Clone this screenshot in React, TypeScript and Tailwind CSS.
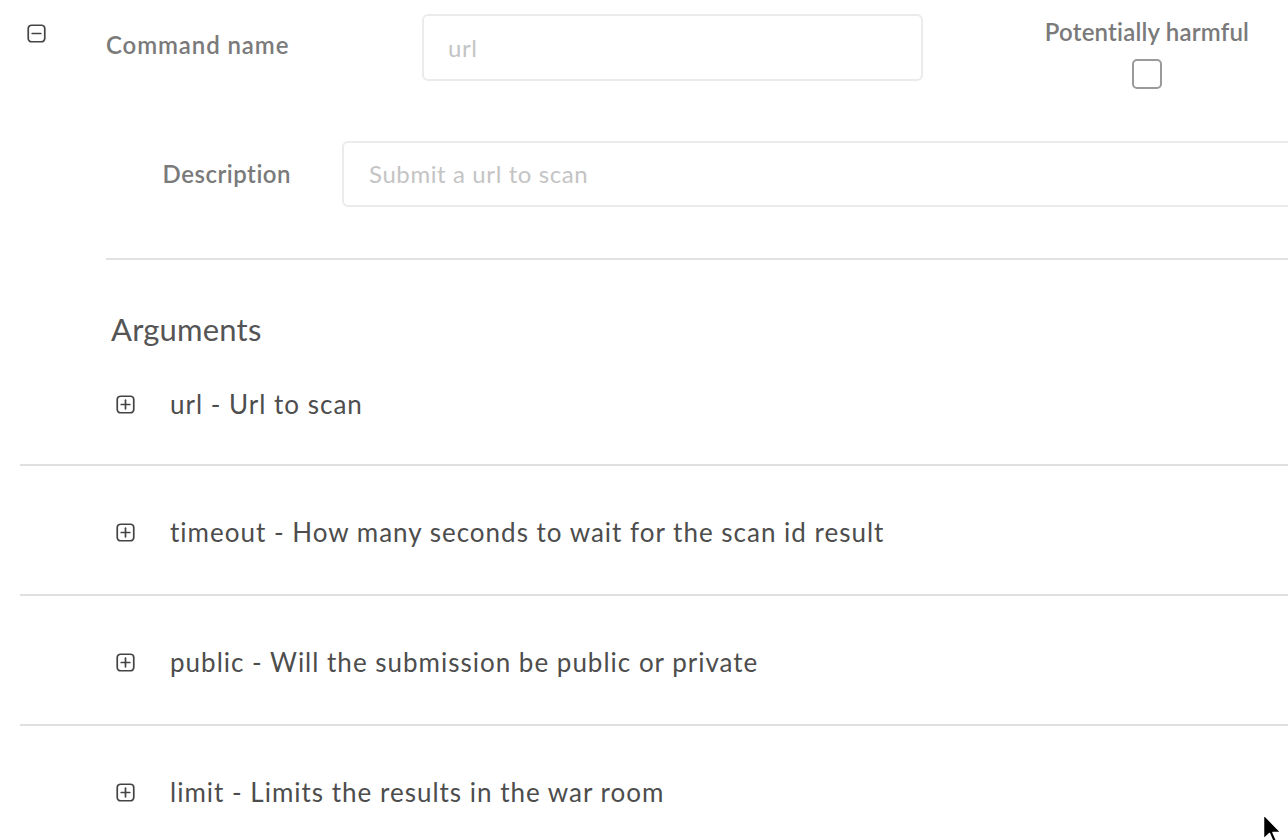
import React from 'react'

interface Argument {
  name: string
  description: string
}

const args: Argument[] = [
  { name: 'url', description: 'Url to scan' },
  { name: 'timeout', description: 'How many seconds to wait for the scan id result' },
  { name: 'public', description: 'Will the submission be public or private' },
  { name: 'limit', description: 'Limits the results in the war room' }
]

function SquareIcon({ plus }: { plus?: boolean }) {
  return (
    <svg width="19" height="19" viewBox="0 0 20 20" fill="none" stroke="#444444" strokeWidth={1.8} strokeLinecap="round">
      <rect x="1.3" y="1.3" width="17.4" height="17.4" rx="3.5" />
      <path d="M5.5 10h9" />
      {plus && <path d="M10 5.5v9" />}
    </svg>
  )
}

export default function App() {
  return (
    <div className="relative h-[840px] w-full overflow-hidden bg-white font-['Lato','Liberation_Sans',sans-serif]">
      {/* Command header */}
      <div className="ml-[20px] flex">
        <div className="ml-[7px] mt-[24px] w-[19px] shrink-0">
          <SquareIcon />
        </div>
        <div className="ml-[60px] min-w-0 flex-1">
          <div className="flex items-start">
            <label className="mt-[31px] w-[316px] shrink-0 text-[24px] leading-[28px] tracking-[0.9px] font-semibold text-[#7a7a7a]">
              Command name
            </label>
            <div className="mt-[14px] flex h-[67px] w-[501px] shrink-0 items-center rounded-[6px] border-2 border-[#ebebeb] pl-[24px] text-[24px] tracking-[0.6px] text-[#c4c4c4]">
              url
            </div>
            <div className="ml-[122px] mt-[18px] flex w-[204px] shrink-0 flex-col items-center">
              <span className="whitespace-nowrap text-[24px] leading-[28px] tracking-[0.2px] font-semibold text-[#7a7a7a]">Potentially harmful</span>
              <div className="mt-[13px] h-[30px] w-[30px] rounded-[5px] border-2 border-[#9a9a9a]" />
            </div>
          </div>

          <div className="mt-[52px] flex items-center">
            <label className="w-[236px] shrink-0 pr-[51px] text-right text-[24px] leading-[28px] tracking-[0.5px] font-semibold text-[#7a7a7a]">
              Description
            </label>
            <div className="flex h-[66px] w-[1000px] shrink-0 items-center rounded-[6px] border-2 border-[#ebebeb] pl-[25px] text-[24px] tracking-[0.6px] text-[#c4c4c4]">
              Submit a url to scan
            </div>
          </div>

          <div className="mt-[51px] h-[2px] bg-[#e2e2e2]" />
        </div>
      </div>

      {/* Arguments */}
      <h2 className="ml-[111px] mt-[51px] text-[31px] leading-[36px] tracking-[0.2px] text-[#555555]">Arguments</h2>
      <div className="ml-[20px]">
        {args.map((arg, i) => (
          <div
            key={arg.name}
            className={`flex items-center border-b-2 border-[#e0e0e0] pl-[96px] ${i === 0 ? 'pt-[41px] pb-[44px]' : 'pt-[50px] pb-[46px]'}`}
          >
            <SquareIcon plus />
            <span className="ml-[35px] whitespace-nowrap text-[26px] leading-[32px] tracking-[1px] text-[#4d4d4d]">
              {arg.name} - {arg.description}
            </span>
          </div>
        ))}
      </div>

      {/* mouse pointer */}
      <svg className="absolute left-[1262px] top-[813px]" width="22" height="32" viewBox="0 0 22 32">
        <path d="M1.5 1.5 L1.5 26 L7.5 20.5 L11.5 30 L15 28.5 L11 19.5 L19 19.5 Z" fill="#000" stroke="#fff" strokeWidth="1.5" strokeLinejoin="round" />
      </svg>
    </div>
  )
}
